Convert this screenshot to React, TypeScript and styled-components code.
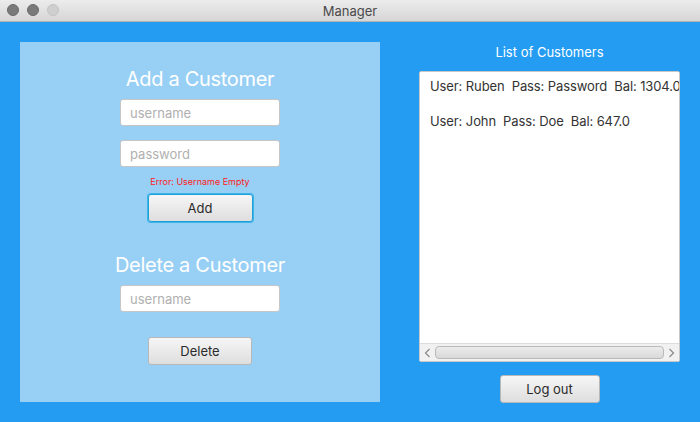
import React from "react";
import styled, { createGlobalStyle } from "styled-components";

const Global = createGlobalStyle`
  html, body { margin: 0; padding: 0; }
  body { width: 700px; height: 422px; overflow: hidden; font-family: Inter, "Open Sans", sans-serif; }
`;

const Window = styled.div`
  width: 700px;
  height: 422px;
  display: flex;
  flex-direction: column;
  background: #239cf2;
`;

const TitleBar = styled.div`
  height: 21px;
  flex: none;
  position: relative;
  display: flex;
  align-items: center;
  justify-content: center;
  background: linear-gradient(#ececec, #d6d6d6);
  border-bottom: 1px solid #b3b3b3;
  font-size: 13px;
  color: #4a4a4a;
`;

const Lights = styled.div`
  position: absolute;
  left: 7px;
  top: 4px;
  display: flex;
  gap: 8px;
`;

const Light = styled.span<{ $dim?: boolean }>`
  width: 12px;
  height: 12px;
  border-radius: 50%;
  background: ${(p) => (p.$dim ? "#cfcfcf" : "#7a7a7a")};
  border: 1px solid ${(p) => (p.$dim ? "#c2c2c2" : "#6b6b6b")};
  box-sizing: border-box;
`;

const Body = styled.div`
  flex: 1;
  display: flex;
  padding: 20px 20px 20px 20px;
  gap: 39px;
`;

const LeftPanel = styled.div`
  width: 361px;
  height: 360px;
  background: #98cff5;
  display: flex;
  flex-direction: column;
  align-items: center;
  padding-top: 25px;
  box-sizing: border-box;
`;

const Heading = styled.div<{ $mt?: number }>`
  color: #ffffff;
  font-size: 20px;
  letter-spacing: -0.3px;
  line-height: 24px;
  margin-top: ${(p) => p.$mt ?? 0}px;
`;

const Input = styled.div<{ $mt: number }>`
  width: 160px;
  height: 27px;
  margin-top: ${(p) => p.$mt}px;
  box-sizing: border-box;
  background: #fff;
  border: 1px solid #c6c6c6;
  border-radius: 3px;
  display: flex;
  align-items: center;
  padding-left: 9px;
  font-size: 13px;
  color: #b0b0b0;
`;

const ErrorText = styled.div`
  color: #ff1a1a;
  font-size: 9px;
  margin-top: 9px;
  line-height: 12px;
`;

const Button = styled.div<{ $mt: number; $focus?: boolean; $w: number }>`
  width: ${(p) => p.$w}px;
  height: 28px;
  margin-top: ${(p) => p.$mt}px;
  box-sizing: border-box;
  border-radius: 3px;
  background: linear-gradient(#f6f6f6, #dedede);
  border: 1px solid ${(p) => (p.$focus ? "#1ea1d9" : "#b8b8b8")};
  box-shadow: ${(p) => (p.$focus ? "0 0 0 1px #3fb4e6" : "none")};
  display: flex;
  align-items: center;
  justify-content: center;
  font-size: 13px;
  color: #2a2a2a;
`;

const RightPanel = styled.div`
  flex: 1;
  display: flex;
  flex-direction: column;
  align-items: center;
`;

const ListTitle = styled.div`
  color: #fff;
  font-size: 13px;
  line-height: 16px;
  margin-top: 2px;
`;

const ListBox = styled.div`
  width: 261px;
  height: 291px;
  margin-top: 11px;
  box-sizing: border-box;
  background: #fff;
  border: 1px solid #c8c8c8;
  border-radius: 2px;
  display: flex;
  flex-direction: column;
  overflow: hidden;
`;

const Rows = styled.div`
  flex: 1;
  padding: 5px 0 0 10px;
  overflow: hidden;
`;

const Row = styled.div`
  height: 35px;
  font-size: 13px;
  letter-spacing: -0.1px;
  line-height: 18px;
  color: #333;
  white-space: pre;
`;

const ScrollBar = styled.div`
  height: 17px;
  flex: none;
  display: flex;
  align-items: center;
  background: #f1f1f1;
  border-top: 1px solid #dcdcdc;
  padding: 0 4px;
  gap: 4px;
`;

const Thumb = styled.div`
  flex: 1;
  height: 11px;
  border: 1px solid #b9b9b9;
  border-radius: 4px;
  background: linear-gradient(#ececec, #d9d9d9);
`;

const LogoutButton = styled(Button)``;

const Arrow = ({ dir }: { dir: "l" | "r" }) => (
  <svg width="7" height="10" viewBox="0 0 7 10">
    <path
      d={dir === "l" ? "M5.5 1 L1.5 5 L5.5 9" : "M1.5 1 L5.5 5 L1.5 9"}
      fill="none"
      stroke="#8a8a8a"
      strokeWidth="1.2"
    />
  </svg>
);

export default function App() {
  return (
    <Window>
      <Global />
      <TitleBar>
        <Lights>
          <Light />
          <Light />
          <Light $dim />
        </Lights>
        Manager
      </TitleBar>
      <Body>
        <LeftPanel>
          <Heading>Add a Customer</Heading>
          <Input $mt={8}>username</Input>
          <Input $mt={14}>password</Input>
          <ErrorText>Error: Username Empty</ErrorText>
          <Button $mt={6} $w={105} $focus>
            Add
          </Button>
          <Heading $mt={31}>Delete a Customer</Heading>
          <Input $mt={8}>username</Input>
          <Button $mt={25} $w={104}>
            Delete
          </Button>
        </LeftPanel>
        <RightPanel>
          <ListTitle>List of Customers</ListTitle>
          <ListBox>
            <Rows>
              <Row>User: Ruben  Pass: Password  Bal: 1304.0</Row>
              <Row>User: John  Pass: Doe  Bal: 647.0</Row>
            </Rows>
            <ScrollBar>
              <Arrow dir="l" />
              <Thumb />
              <Arrow dir="r" />
            </ScrollBar>
          </ListBox>
          <LogoutButton $mt={13} $w={100}>
            Log out
          </LogoutButton>
        </RightPanel>
      </Body>
    </Window>
  );
}
